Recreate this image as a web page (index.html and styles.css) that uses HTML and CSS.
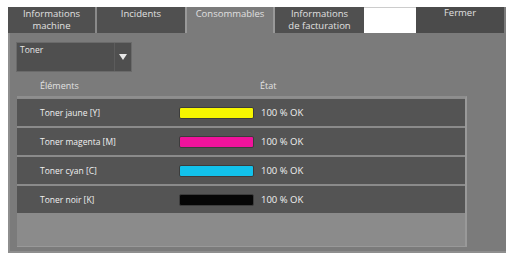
FILE: index.html
```html
<!doctype html>
<html lang="fr">
    <head>
        <title>Consommables</title>
        <link rel="stylesheet" href="styles.css">
    </head>
    <body>
        <div class="panel">
            <div class="tabs">
                <div class="tab tab-machine">Informations<br>machine</div>
                <div class="tab tab-incidents">Incidents</div>
                <div class="tab tab-active">Consommables</div>
                <div class="tab tab-billing">Informations<br>de facturation</div>
                <div class="tab-blank"></div>
                <div class="tab tab-close">Fermer</div>
            </div>

            <div class="content">
                <div class="select">
                    <span class="select-label">Toner</span>
                    <span class="select-arrow">
                        <svg width="8" height="6" viewBox="0 0 8 6">
                            <path d="M0 0 L8 0 L4 6 Z" fill="#e8e8e8" />
                        </svg>
                    </span>
                </div>

                <div class="list-header">
                    <span class="col-name">Éléments</span>
                    <span class="col-state">État</span>
                </div>

                <div class="list">
                    <div class="row">
                        <span class="col-name">Toner jaune [Y]</span>
                        <span class="bar bar-yellow"></span>
                        <span class="level">100 % OK</span>
                    </div>
                    <div class="row">
                        <span class="col-name">Toner magenta [M]</span>
                        <span class="bar bar-magenta"></span>
                        <span class="level">100 % OK</span>
                    </div>
                    <div class="row">
                        <span class="col-name">Toner cyan [C]</span>
                        <span class="bar bar-cyan"></span>
                        <span class="level">100 % OK</span>
                    </div>
                    <div class="row">
                        <span class="col-name">Toner noir [K]</span>
                        <span class="bar bar-black"></span>
                        <span class="level">100 % OK</span>
                    </div>
                </div>
            </div>
        </div>
    </body>
</html>
```

FILE: styles.css
```css
body {
    margin: 0;
    background: #fff;
    font-family: "Open Sans", "DejaVu Sans", sans-serif;
    color: #e6e6e6;
}
.panel {
    width: 498px;
    height: 246px;
    margin: 7px 0 0 8px;
    background: #7b7b7b;
    box-sizing: border-box;
    border-left: 2px solid #8e8e8e;
    border-bottom: 2px solid #8e8e8e;
    display: flex;
    flex-direction: column;
}
/* tab bar */
.tabs {
    display: flex;
    height: 26px;
    margin-left: -2px;
}
.tab {
    background: #505050;
    font-size: 9.5px;
    line-height: 12px;
    text-align: center;
    padding-top: 1px;
    box-sizing: border-box;
    color: #e0e0e0;
}
.tab-machine {
    width: 89px;
    border-right: 2px solid #8a8a8a;
}
.tab-incidents {
    width: 88px;
}
.tab-active {
    width: 90px;
    background: #7b7b7b;
    border-left: 2px solid #999;
    border-right: 2px solid #999;
}
.tab-billing {
    width: 89px;
}
.tab-blank {
    width: 52px;
    background: #fff;
    border-top: 1px solid #ccc;
    box-sizing: border-box;
}
.tab-close {
    width: 88px;
    background: #4b4b4b;
    padding-top: 0;
    line-height: 11px;
}
/* content */
.content {
    padding: 9px 0 0 6px;
    flex: 1;
    display: flex;
    flex-direction: column;
}
.select {
    width: 116px;
    height: 30px;
    background: #4f4f4f;
    border: 1px solid #6a6a6a;
    box-sizing: border-box;
    display: flex;
}
.select-label {
    flex: 1;
    font-size: 8.5px;
    line-height: 14px;
    padding-left: 3px;
}
.select-arrow {
    width: 16px;
    border-left: 1px solid #5c5c5c;
    display: flex;
    align-items: center;
    justify-content: center;
}
.list-header {
    display: flex;
    font-size: 9px;
    height: 22px;
    align-items: center;
    color: #e2e2e2;
    padding-top: 2px;
}
.list-header .col-name {
    width: 220px;
    padding-left: 24px;
}
.list {
    width: 450px;
    height: 151px;
    margin-left: 1px;
    background: #8b8b8b;
    border-right: 2px solid #999;
    border-top: 2px solid #8e8e8e;
    border-bottom: 1px solid #999;
    box-sizing: border-box;
}
.row {
    display: flex;
    align-items: center;
    height: 27px;
    margin-top: 2px;
    background: #545454;
    font-size: 8.5px;
    color: #f0f0f0;
}
.row:first-child {
    margin-top: 1px;
}
.row .col-name {
    width: 139px;
    padding-left: 23px;
}
.bar {
    width: 75px;
    height: 12px;
    border-radius: 2px;
    border: 1px solid #3c3c3c;
    box-sizing: border-box;
}
.bar-yellow {
    background: #f6f600;
}
.bar-magenta {
    background: #f0139c;
}
.bar-cyan {
    background: #12c2ec;
}
.bar-black {
    background: #050505;
}
.level {
    padding-left: 7px;
    font-size: 9.5px;
}
```
